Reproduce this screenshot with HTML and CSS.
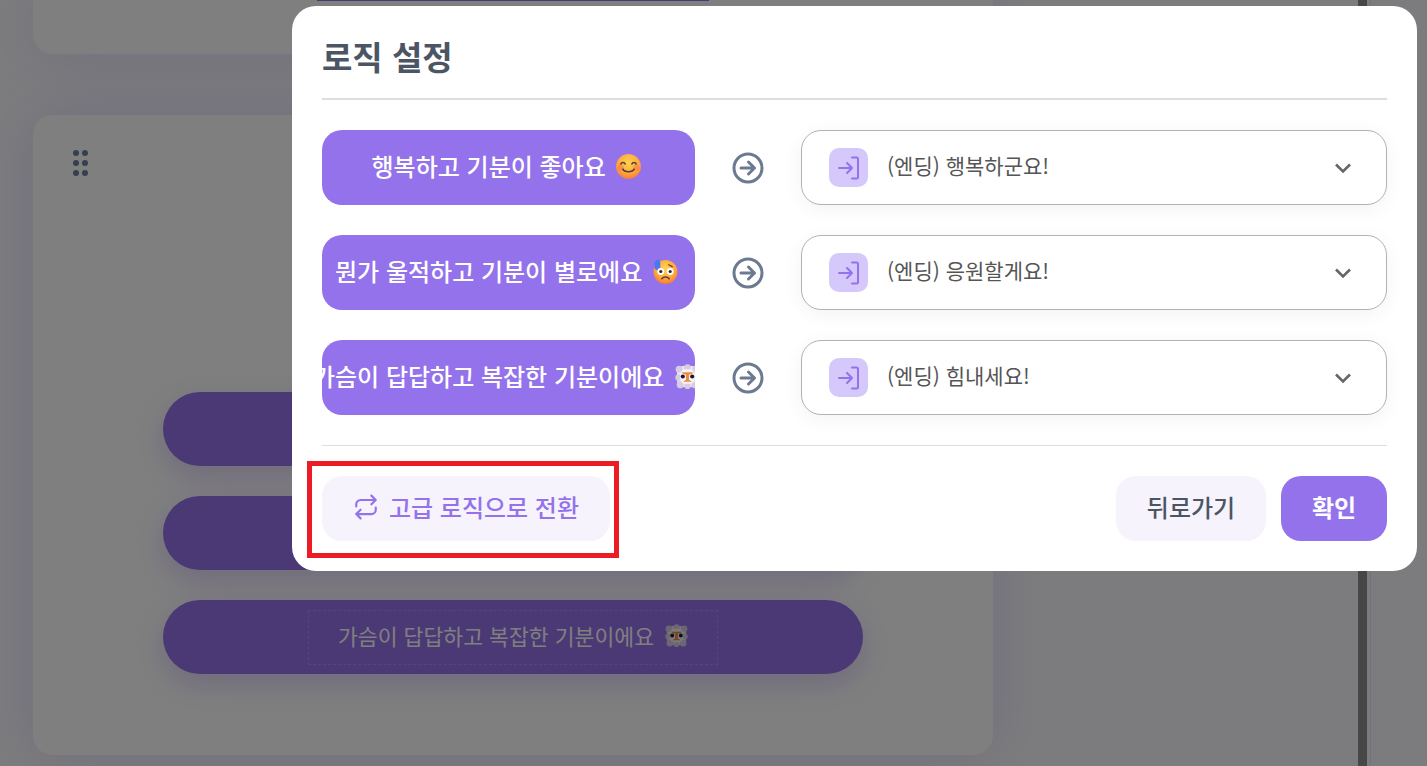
FILE: index.html
```html
<!DOCTYPE html>
<html lang="ko">
  <head>
    <meta charset="UTF-8" />
    <meta name="viewport" content="width=device-width, initial-scale=1.0" />
    <title>로직 설정</title>
    <link rel="stylesheet" href="styles.css">
  </head>
  <body>
    <!-- 이모지 모음 -->
    <svg class="defs" aria-hidden="true">
      <defs>
        <radialGradient id="faceFill" cx="50%" cy="35%" r="70%">
          <stop offset="0%" stop-color="#ffd34f" />
          <stop offset="60%" stop-color="#ffa83c" />
          <stop offset="100%" stop-color="#f4703f" />
        </radialGradient>
        <symbol id="emojiSmile" viewBox="0 0 24 24">
          <circle cx="12" cy="12" r="12" fill="url(#faceFill)" />
          <circle cx="4.5" cy="13" r="3" fill="#f8705a" opacity="0.45" />
          <circle cx="19.5" cy="13" r="3" fill="#f8705a" opacity="0.45" />
          <path d="M4.6 9.6c.8-2 3.4-2 4.2 0M15.2 9.6c.8-2 3.4-2 4.2 0" fill="none" stroke="#5b3a3a" stroke-width="1.5" stroke-linecap="round" />
          <path d="M6.6 14.6c1.4 3.2 9.4 3.2 10.8 0" fill="none" stroke="#5b3a3a" stroke-width="1.6" stroke-linecap="round" />
        </symbol>
        <symbol id="emojiSweat" viewBox="0 0 24 24">
          <circle cx="12" cy="12.5" r="11.5" fill="url(#faceFill)" />
          <path d="M1.5 4.5C1.5 2 3 .6 4.4.6c1.5 0 2.6 1.6 2.6 3.2v4c0 1.6-1.2 2.8-2.7 2.8S1.5 9.4 1.5 7.8z" fill="#4a78ee" />
          <circle cx="7.5" cy="12" r="3.3" fill="#fff" />
          <circle cx="16.5" cy="12" r="3.3" fill="#fff" />
          <circle cx="7.5" cy="12" r="1.5" fill="#2d2530" />
          <circle cx="16.5" cy="12" r="1.5" fill="#2d2530" />
          <path d="M15 5.5l3.5 1.8" fill="none" stroke="#6b3d2e" stroke-width="1.2" stroke-linecap="round" />
          <path d="M8.5 19c1.6-2.2 5.4-2.2 7 0" fill="none" stroke="#5b3a3a" stroke-width="1.5" stroke-linecap="round" />
        </symbol>
        <symbol id="emojiCloud" viewBox="0 0 24 24">
          <rect x="2" y="2" width="20" height="20" rx="6" fill="#efeaf5" />
          <g fill="#d6cde2">
            <circle cx="4" cy="5" r="3.4" />
            <circle cx="12" cy="3.5" r="3.3" />
            <circle cx="20" cy="5" r="3.4" />
            <circle cx="3.5" cy="13" r="3.2" />
            <circle cx="20.5" cy="13" r="3.2" />
            <circle cx="5" cy="20" r="3.4" />
            <circle cx="12" cy="21" r="3" />
            <circle cx="19" cy="20" r="3.4" />
          </g>
          <rect x="5" y="5" width="14" height="14" rx="5" fill="#f7f3fa" />
          <path d="M6 8h12l-3 2h-1.6v5l3 2H7.6l3-2v-5H9z" fill="#f08a3c" />
          <circle cx="7.5" cy="12" r="2" fill="#211b25" />
          <circle cx="16.5" cy="12" r="2" fill="#211b25" />
        </symbol>
      </defs>
    </svg>

    <div class="page">
      <main class="content">
        <section class="card card-top">
          <div class="top-option"></div>
        </section>
        <section class="card card-main">
          <svg class="handle" width="16" height="26" viewBox="0 0 16 26">
            <circle cx="3" cy="3" r="3" />
            <circle cx="12" cy="3" r="3" />
            <circle cx="3" cy="13" r="3" />
            <circle cx="12" cy="13" r="3" />
            <circle cx="3" cy="23" r="3" />
            <circle cx="12" cy="23" r="3" />
          </svg>
          <div class="options">
            <div class="option"></div>
            <div class="option"></div>
            <div class="option"><span class="option-box">가슴이 답답하고 복잡한 기분이에요 <svg class="emoji-sm"><use href="#emojiCloud" /></svg></span></div>
          </div>
        </section>
      </main>
      <div class="scroll-thumb"></div>
      <aside class="side"></aside>
    </div>

    <div class="overlay">
      <div class="modal">
        <h2 class="modal-title">로직 설정</h2>

        <div class="logic-list">
          <div class="logic-row">
            <div class="logic-answer"><span>행복하고 기분이 좋아요 <svg class="emoji"><use href="#emojiSmile" /></svg></span></div>
            <div class="logic-arrow">
              <svg width="34" height="34" viewBox="0 0 34 34"><circle cx="17" cy="17" r="14" /><path d="M10 17h13.500M17.500 11l6 6-6 6" /></svg>
            </div>
            <div class="logic-select">
              <span class="select-icon">
                <svg width="24" height="24" viewBox="0 0 24 24"><path d="M2 12h13M10 7l5 5-5 5M15 1.5h4.500a1.500 1.500 0 0 1 1.500 1.500v18a1.500 1.500 0 0 1-1.500 1.500H15" /></svg>
              </span>
              <span class="select-text">(엔딩) 행복하군요!</span>
              <svg class="chevron" width="18" height="12" viewBox="0 0 18 12"><path d="M2 2.5l7 7 7-7" /></svg>
            </div>
          </div>

          <div class="logic-row">
            <div class="logic-answer"><span>뭔가 울적하고 기분이 별로에요 <svg class="emoji"><use href="#emojiSweat" /></svg></span></div>
            <div class="logic-arrow">
              <svg width="34" height="34" viewBox="0 0 34 34"><circle cx="17" cy="17" r="14" /><path d="M10 17h13.500M17.500 11l6 6-6 6" /></svg>
            </div>
            <div class="logic-select">
              <span class="select-icon">
                <svg width="24" height="24" viewBox="0 0 24 24"><path d="M2 12h13M10 7l5 5-5 5M15 1.5h4.500a1.500 1.500 0 0 1 1.500 1.500v18a1.500 1.500 0 0 1-1.500 1.500H15" /></svg>
              </span>
              <span class="select-text">(엔딩) 응원할게요!</span>
              <svg class="chevron" width="18" height="12" viewBox="0 0 18 12"><path d="M2 2.5l7 7 7-7" /></svg>
            </div>
          </div>

          <div class="logic-row">
            <div class="logic-answer"><span>가슴이 답답하고 복잡한 기분이에요 <svg class="emoji"><use href="#emojiCloud" /></svg></span></div>
            <div class="logic-arrow">
              <svg width="34" height="34" viewBox="0 0 34 34"><circle cx="17" cy="17" r="14" /><path d="M10 17h13.500M17.500 11l6 6-6 6" /></svg>
            </div>
            <div class="logic-select">
              <span class="select-icon">
                <svg width="24" height="24" viewBox="0 0 24 24"><path d="M2 12h13M10 7l5 5-5 5M15 1.5h4.500a1.500 1.500 0 0 1 1.500 1.500v18a1.500 1.500 0 0 1-1.500 1.500H15" /></svg>
              </span>
              <span class="select-text">(엔딩) 힘내세요!</span>
              <svg class="chevron" width="18" height="12" viewBox="0 0 18 12"><path d="M2 2.5l7 7 7-7" /></svg>
            </div>
          </div>
        </div>

        <div class="modal-footer">
          <button class="btn btn-switch">
            <svg width="26" height="26" viewBox="0 0 24 24"><path d="M17 1.5l4 4-4 4M3 11.5v-2a4 4 0 0 1 4-4h14M7 22.5l-4-4 4-4M21 12.5v2a4 4 0 0 1-4 4H3" /></svg>
            고급 로직으로 전환
          </button>
          <div class="footer-right">
            <button class="btn btn-back">뒤로가기</button>
            <button class="btn btn-ok">확인</button>
          </div>
        </div>
      </div>
    </div>
  </body>
</html>
```

FILE: styles.css
```css
* {
  box-sizing: border-box;
}
html,
body {
  height: 100%;
  margin: 0;
  overflow: hidden;
}
body {
  background-color: #f9f9fc;
  font-family: "Noto Sans CJK KR", "Noto Sans", sans-serif;
}
.defs {
  position: absolute;
  width: 0;
  height: 0;
}

/* 뒤쪽 페이지 */
.page {
  display: flex;
  height: 766px;
}
.content {
  width: 1358px;
  padding-left: 33px;
}
.card {
  width: 960px;
  background-color: white;
  border-radius: 20px;
  box-shadow: 0 0 60px rgba(148, 114, 235, 0.22);
}
.card-top {
  display: flex;
  justify-content: center;
  height: 54px;
  border-radius: 0 0 20px 20px;
}
.top-option {
  width: 392px;
  height: 1px;
  background-color: #9472eb;
}
.card-main {
  height: 640px;
  margin-top: 61px;
  padding: 35px 40px 0;
}
.handle {
  display: block;
  fill: #6b7e9b;
}
.options {
  display: flex;
  flex-direction: column;
  align-items: center;
  gap: 30px;
  margin-top: 216px;
}
.option {
  display: flex;
  align-items: center;
  justify-content: center;
  width: 700px;
  height: 74px;
  border-radius: 37px;
  background-color: #9472eb;
  box-shadow: 0 10px 30px rgba(148, 114, 235, 0.3);
  color: white;
  font-size: 21.6px;
}
.option-box {
  display: flex;
  align-items: center;
  justify-content: center;
  gap: 5px;
  width: 410px;
  height: 55px;
  padding-bottom: 4px;
  border: 1px dashed rgba(255, 255, 255, 0.2);
  white-space: pre;
}
.emoji-sm {
  width: 23px;
  height: 23px;
}
.scroll-thumb {
  width: 9px;
  background-color: #8e8e8e;
}
.side {
  flex: 1;
  margin-left: 3px;
  border-left: 1px solid #e6e2fe;
}

/* 모달 */
.overlay {
  position: fixed;
  top: 0;
  right: 0;
  bottom: 0;
  left: 0;
  display: flex;
  align-items: flex-start;
  justify-content: flex-end;
  padding: 6px 10px;
  background-color: rgba(0, 0, 0, 0.5);
}
.modal {
  width: 1125px;
  padding: 30px;
  border-radius: 24px;
  background-color: white;
}
.modal-title {
  height: 64px;
  margin: 0;
  border-bottom: 2px solid #dadee3;
  color: #4b5563;
  font-size: 33px;
  font-weight: 700;
  line-height: 40px;
}
.logic-list {
  display: flex;
  flex-direction: column;
  gap: 30px;
  margin-top: 30px;
}
.logic-row {
  display: flex;
  align-items: center;
}
.logic-answer {
  display: flex;
  align-items: center;
  justify-content: center;
  flex-shrink: 0;
  width: 373px;
  height: 75px;
  padding-bottom: 4px;
  border-radius: 20px;
  background-color: #9472eb;
  color: white;
  font-size: 24px;
  font-weight: 500;
  /* 넘치는 글자는 잘림 */
  overflow: hidden;
}
.logic-answer span {
  display: flex;
  align-items: center;
  flex-shrink: 0;
  white-space: pre;
}
.emoji {
  width: 25px;
  height: 25px;
  margin: 2px 4px 0;
}
.logic-arrow {
  display: flex;
  justify-content: center;
  width: 106px;
}
.logic-arrow svg {
  fill: none;
  stroke: #6b7a90;
  stroke-width: 3;
  stroke-linecap: round;
  stroke-linejoin: round;
}
.logic-select {
  display: flex;
  align-items: center;
  flex: 1;
  height: 75px;
  padding: 0 34px 0 27px;
  border: 1px solid #b2b2b2;
  border-radius: 20px;
  background-color: white;
  box-shadow: 0 4px 20px rgba(0, 0, 0, 0.05);
}
.select-icon {
  display: flex;
  align-items: center;
  justify-content: center;
  width: 39px;
  height: 39px;
  border-radius: 10px;
  background-color: #d5c8fa;
}
.select-icon svg {
  fill: none;
  stroke: #9472eb;
  stroke-width: 2;
  stroke-linecap: round;
  stroke-linejoin: round;
}
.select-text {
  flex: 1;
  margin-left: 19px;
  padding-bottom: 5px;
  color: #555;
  font-size: 21px;
}
.chevron {
  fill: none;
  stroke: #666;
  stroke-width: 2.6;
}
.modal-footer {
  display: flex;
  align-items: center;
  justify-content: space-between;
  margin-top: 30px;
  padding-top: 30px;
  border-top: 1px solid #dedede;
}
.footer-right {
  display: flex;
  gap: 15px;
}
.btn {
  display: flex;
  align-items: center;
  justify-content: center;
  height: 65px;
  padding: 0 0 4px;
  border: 0;
  border-radius: 20px;
  font-family: inherit;
  font-size: 24px;
  font-weight: 500;
}
.btn-switch {
  position: relative;
  gap: 10px;
  width: 288px;
  background-color: #f6f3fd;
  color: #9472eb;
}
/* 빨간 강조 박스 */
.btn-switch::after {
  content: "";
  position: absolute;
  top: -15px;
  right: -9px;
  bottom: -17px;
  left: -15px;
  border: 5px solid #ed1c24;
}
.btn-switch svg {
  fill: none;
  stroke: #9472eb;
  stroke-width: 2;
  stroke-linecap: round;
  stroke-linejoin: round;
}
.btn-back {
  width: 150px;
  background-color: #f6f3fd;
  color: #4b5563;
}
.btn-ok {
  width: 106px;
  background-color: #9472eb;
  color: white;
  font-weight: 700;
}
```
